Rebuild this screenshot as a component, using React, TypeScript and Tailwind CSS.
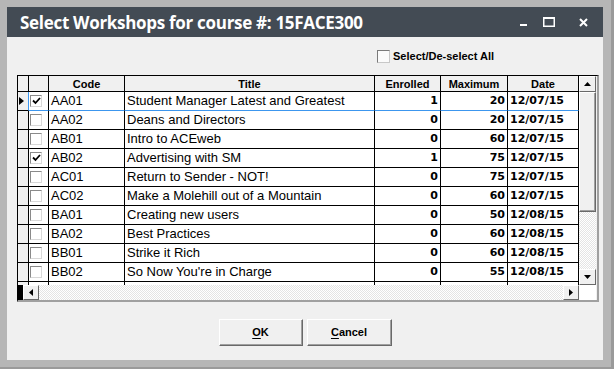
import React from 'react';

type Row = {
  code: string;
  title: string;
  enrolled: number;
  max: number;
  date: string;
  checked?: boolean;
};

const rows: Row[] = [
  { code: 'AA01', title: 'Student Manager Latest and Greatest', enrolled: 1, max: 20, date: '12/07/15', checked: true },
  { code: 'AA02', title: 'Deans and Directors', enrolled: 0, max: 20, date: '12/07/15' },
  { code: 'AB01', title: 'Intro to ACEweb', enrolled: 0, max: 60, date: '12/07/15' },
  { code: 'AB02', title: 'Advertising with SM', enrolled: 1, max: 75, date: '12/07/15', checked: true },
  { code: 'AC01', title: 'Return to Sender - NOT!', enrolled: 0, max: 75, date: '12/07/15' },
  { code: 'AC02', title: 'Make a Molehill out of a Mountain', enrolled: 0, max: 60, date: '12/07/15' },
  { code: 'BA01', title: 'Creating new users', enrolled: 0, max: 50, date: '12/08/15' },
  { code: 'BA02', title: 'Best Practices', enrolled: 0, max: 60, date: '12/08/15' },
  { code: 'BB01', title: 'Strike it Rich', enrolled: 0, max: 60, date: '12/08/15' },
  { code: 'BB02', title: "So Now You're in Charge", enrolled: 0, max: 55, date: '12/08/15' },
];

const hdr = "font-['Liberation_Sans',Arial,sans-serif] text-[11px] font-bold";
const num = "font-['DejaVu_Sans',Verdana,sans-serif] text-[11px] font-bold";
const txt = "font-['Liberation_Sans',Arial,sans-serif] text-[13px]";

function CellBox({ checked }: { checked?: boolean }) {
  return (
    <div className="ml-[1px] mt-[3px] w-[12px] h-[12px] border border-t-[#8a8a8a] border-l-[#8a8a8a] border-r-[#d8d8d8] border-b-[#d8d8d8] bg-white flex items-center justify-center">
      {checked && (
        <svg width="9" height="8" viewBox="0 0 9 8">
          <path d="M1 3.5 L3.5 6 L8 1" stroke="#000" strokeWidth="1.8" fill="none" />
        </svg>
      )}
    </div>
  );
}

function Arrow({ dir }: { dir: 'up' | 'down' | 'left' | 'right' }) {
  const d = {
    up: 'M0 4 L3.5 0 L7 4 Z',
    down: 'M0 0 L3.5 4 L7 0 Z',
    left: 'M4 0 L0 3.5 L4 7 Z',
    right: 'M0 0 L4 3.5 L0 7 Z',
  }[dir];
  const w = dir === 'up' || dir === 'down' ? 7 : 4;
  const h = dir === 'up' || dir === 'down' ? 4 : 7;
  return (
    <svg width={w} height={h} viewBox={`0 0 ${w} ${h}`}>
      <path d={d} fill="#000" />
    </svg>
  );
}

function SBtn({ dir, className }: { dir: 'up' | 'down' | 'left' | 'right'; className: string }) {
  return (
    <div
      className={`${className} bg-[#f0f0f0] border border-t-white border-l-white border-r-[#696969] border-b-[#696969] flex items-center justify-center shrink-0`}
    >
      <Arrow dir={dir} />
    </div>
  );
}

const checker = 'bg-[repeating-conic-gradient(#ffffff_0_25%,#e4e4e4_0_50%)] bg-[length:2px_2px]';

function WinButton({ label, rest, w }: { label: string; rest: string; w: string }) {
  return (
    <button
      className={`${w} h-[27px] bg-[#f0f0f0] border border-t-white border-l-white border-r-[#696969] border-b-[#696969] shadow-[inset_-1px_-1px_0_#a0a0a0] ${hdr} text-black`}
    >
      <span className="underline underline-offset-2">{label}</span>
      {rest}
    </button>
  );
}

export default function App() {
  return (
    <div className="w-[614px] h-[369px] bg-[#b6b6b6] pl-[7px] pt-[7px] pr-[8px] pb-[7px] border-r-[3px] border-b-[2px] border-[#9a9a9a] box-border overflow-hidden">
      <div className="flex flex-col h-full">
        {/* title bar */}
        <div className="h-[30px] bg-[#434b54] flex items-center pl-[13px] pr-[15px] shrink-0">
          <div className="font-['Open_Sans',sans-serif] text-[17px] font-bold text-white tracking-[-0.3px] flex-1 leading-none pt-[1px]">
            Select Workshops for course #: 15FACE300
          </div>
          <div className="flex items-center">
            <svg width="7" height="10" viewBox="0 0 7 10" className="mr-[16px]">
              <rect x="0" y="7" width="7" height="2" fill="#fff" />
            </svg>
            <svg width="12" height="10" viewBox="0 0 12 10" className="mr-[24px]">
              <rect x="0.75" y="1" width="10.5" height="8.25" stroke="#fff" strokeWidth="1.5" fill="none" />
              <rect x="0" y="0" width="12" height="2" fill="#fff" />
            </svg>
            <svg width="9" height="9" viewBox="0 0 9 9">
              <path d="M1 1 L8 8 M8 1 L1 8" stroke="#fff" strokeWidth="2" />
            </svg>
          </div>
        </div>

        {/* body */}
        <div className="flex-1 bg-[#f0f0f0] relative">
          <div className="flex items-center h-[13px] mt-[13px] ml-[370px]">
            <div className="w-[13px] h-[13px] border border-t-[#7a7a7a] border-l-[#7a7a7a] border-r-[#c8c8c8] border-b-[#c8c8c8] bg-[#fbfbfb]" />
            <span className={`${hdr} ml-[3px] text-black`}>Select/De-select All</span>
          </div>

          {/* grid */}
          <div className="ml-[10px] mt-[12px] w-[582px] border-l border-t border-l-black border-t-black border-r-2 border-b-2 border-r-[#a0a0a0] border-b-[#a0a0a0] flex flex-col">
            <div className="flex h-[209px]">
              <div className="w-[561px] overflow-hidden bg-white">
                {/* header */}
                <div className="flex h-[16px] bg-[#f0f0f0]">
                  <div className="w-[11px] border-r border-b border-black" />
                  <div className="w-[20px] border-r border-b border-black" />
                  <div className={`w-[76px] border-r border-b border-black text-center leading-[16px] ${hdr}`}>Code</div>
                  <div className={`w-[250px] border-r border-b border-black text-center leading-[16px] ${hdr}`}>Title</div>
                  <div className={`w-[66px] border-r border-b border-black text-center leading-[16px] ${hdr}`}>Enrolled</div>
                  <div className={`w-[67px] border-r border-b border-black text-center leading-[16px] ${hdr}`}>Maximum</div>
                  <div className={`w-[71px] border-r border-b border-black text-center leading-[16px] ${hdr}`}>Date</div>
                </div>
                {rows.map((r, i) => {
                  const b = i === 0 ? 'border-b-[#3c96ee]' : 'border-b-black';
                  return (
                    <div key={r.code} className="flex h-[19px] text-black">
                      <div
                        className={`w-[11px] bg-[#f0f0f0] border-b border-b-black border-r ${
                          i === 0 ? 'border-r-[#3c96ee]' : 'border-r-black'
                        } flex items-center pl-[1px]`}
                      >
                        {i === 0 && (
                          <svg width="5" height="8" viewBox="0 0 5 8">
                            <path d="M0 0 L5 4 L0 8 Z" fill="#000" />
                          </svg>
                        )}
                      </div>
                      <div className={`w-[20px] border-r border-r-black border-b ${b}`}>
                        <CellBox checked={r.checked} />
                      </div>
                      <div className={`w-[76px] border-r border-r-black border-b ${b} pl-[2px] leading-[18px] ${txt}`}>{r.code}</div>
                      <div className={`w-[250px] border-r border-r-black border-b ${b} pl-[2px] leading-[18px] ${txt} whitespace-nowrap`}>
                        {r.title}
                      </div>
                      <div className={`w-[66px] border-r border-r-black border-b ${b} pr-[2px] text-right leading-[18px] ${num}`}>{r.enrolled}</div>
                      <div className={`w-[67px] border-r border-r-black border-b ${b} pr-[2px] text-right leading-[18px] ${num}`}>{r.max}</div>
                      <div className={`w-[71px] border-r border-r-black border-b ${b} pl-[2px] leading-[18px] ${num}`}>{r.date}</div>
                    </div>
                  );
                })}
                {/* partial row */}
                <div className="flex h-[19px]">
                  <div className="w-[11px] bg-[#f0f0f0] border-r border-black" />
                  <div className="w-[20px] border-r border-black">
                    <CellBox />
                  </div>
                  <div className="w-[76px] border-r border-black" />
                  <div className="w-[250px] border-r border-black" />
                  <div className="w-[66px] border-r border-black" />
                  <div className="w-[67px] border-r border-black" />
                  <div className="w-[71px] border-r border-black" />
                </div>
              </div>
              {/* vertical scrollbar */}
              <div className={`w-[17px] flex flex-col ${checker}`}>
                <SBtn dir="up" className="w-[17px] h-[16px]" />
                <div className="w-[17px] h-[120px] bg-[#f0f0f0] border border-t-white border-l-white border-r-[#696969] border-b-[#696969] shadow-[inset_-1px_-1px_0_#a0a0a0]" />
                <div className="flex-1" />
                <SBtn dir="down" className="w-[17px] h-[16px]" />
              </div>
            </div>
            {/* horizontal scrollbar */}
            <div className="flex h-[15px]">
              <div className="w-[5px] bg-black" />
              <SBtn dir="left" className="w-[16px] h-[15px]" />
              <div className={`w-[524px] ${checker}`} />
              <SBtn dir="right" className="w-[16px] h-[15px]" />
              <div className="w-[17px] bg-white" />
            </div>
          </div>

          {/* buttons */}
          <div className="flex justify-center gap-[4px] mt-[17px]">
            <WinButton label="O" rest="K" w="w-[84px]" />
            <WinButton label="C" rest="ancel" w="w-[85px]" />
          </div>
        </div>
      </div>
    </div>
  );
}
